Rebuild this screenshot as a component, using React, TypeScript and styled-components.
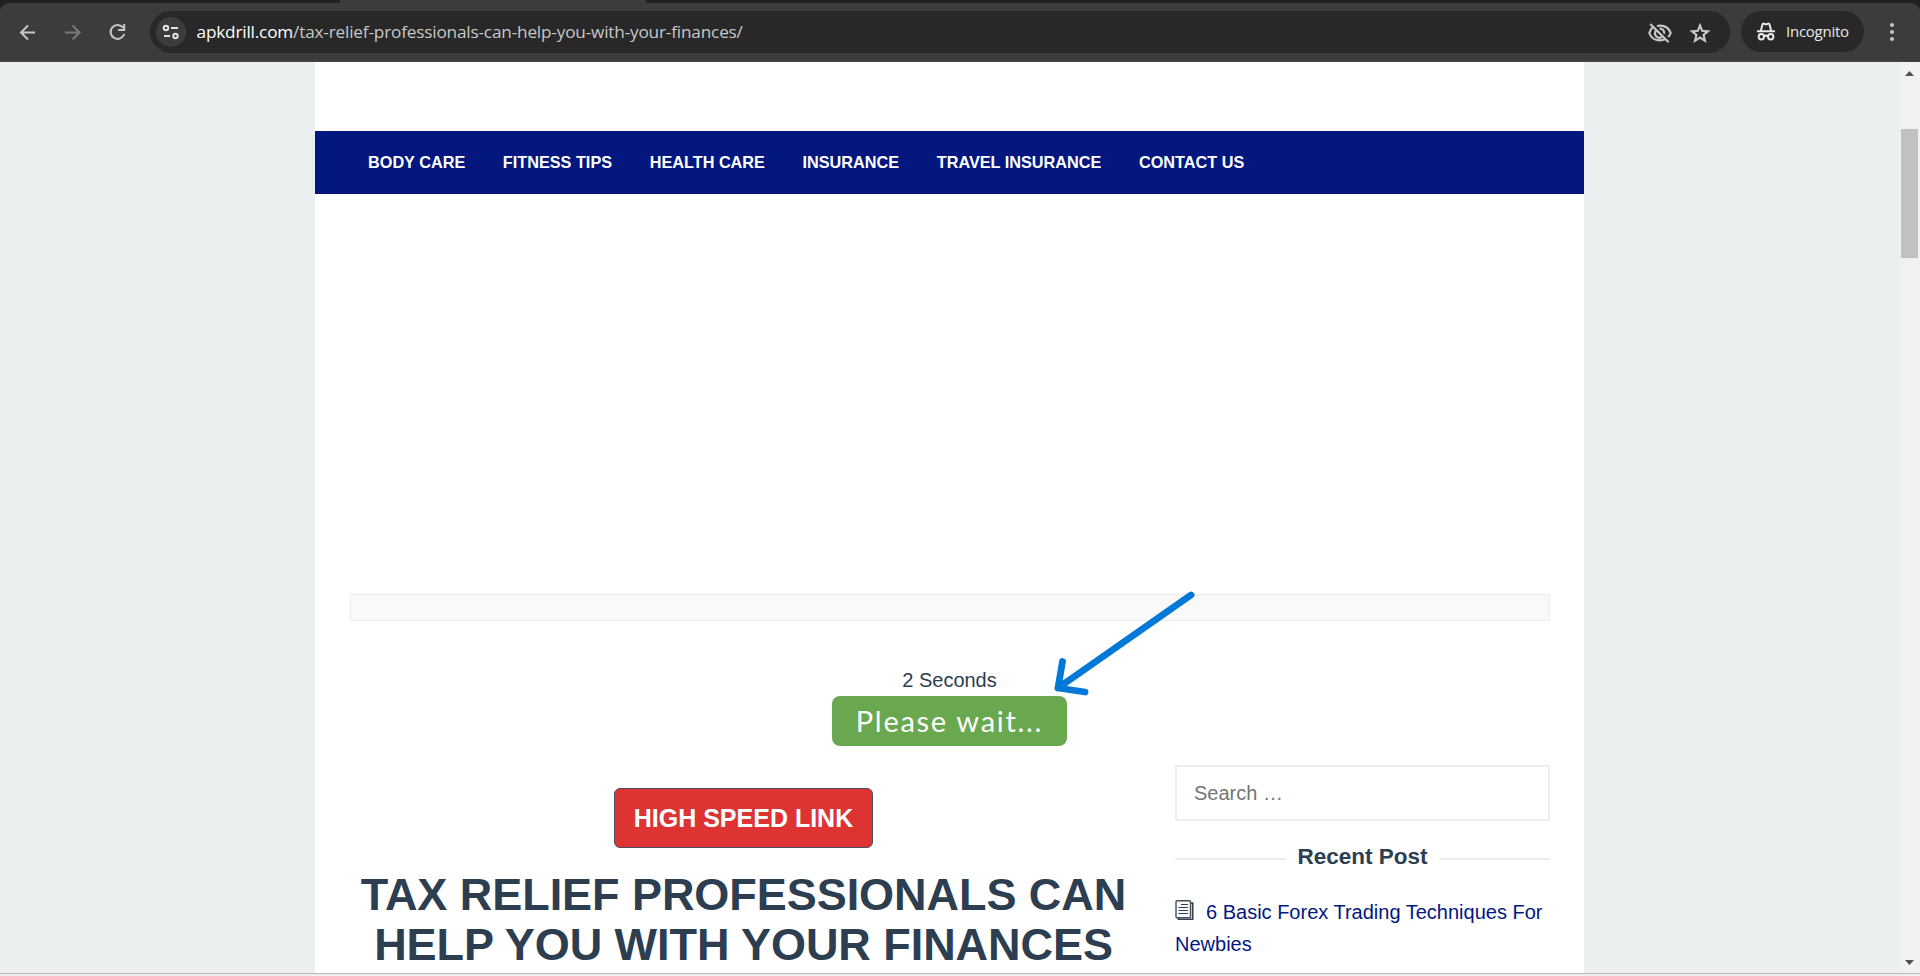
import React from "react";
import styled, { createGlobalStyle } from "styled-components";

const GlobalStyle = createGlobalStyle`
  *, *::before, *::after { box-sizing: border-box; }
  body { margin: 0; overflow: hidden; background: #ebeff0; }
`;

const Window = styled.div`
  position: relative;
  width: 1920px;
  height: 976px;
  display: flex;
  flex-direction: column;
  overflow: hidden;
  background: #3c3c3c;
  color: #2c3e50;
  font-family: "Liberation Sans", Arial, sans-serif;
  font-size: 20px;
`;

const TabStrip = styled.div`
  height: 3px;
  display: flex;
  background: #1f2221;
`;
const ActiveTab = styled.div`
  width: 306px;
  margin-left: 340px;
  height: 3px;
  background: #3c3c3c;
`;

const Toolbar = styled.header`
  height: 59px;
  flex: none;
  display: flex;
  align-items: flex-start;
  padding: 8px 0 0 16px;
  background: #3c3c3c;
  border-radius: 9px 9px 0 0;
  border-bottom: 1px solid #474747;
`;
const Backing = styled.div`
  flex: none;
  background: #1f2221;
`;

const ToolButton = styled.span<{ $dim?: boolean }>`
  width: 45px;
  height: 42px;
  display: flex;
  align-items: center;
  color: ${(p) => (p.$dim ? "#7b7b7b" : "#c7c7c7")};
`;

const AddressBar = styled.div`
  width: 1580px;
  height: 42px;
  margin-left: -1px;
  display: flex;
  align-items: center;
  padding: 0 19px 0 6px;
  border-radius: 21px;
  background: #282828;
  color: #c7c7c7;
`;
const SiteControls = styled.span`
  width: 30px;
  height: 30px;
  display: grid;
  place-items: center;
  border-radius: 50%;
  background: #3c3c3c;
  color: #e3e3e3;
`;
const Url = styled.span`
  flex: 1;
  margin-left: 10.5px;
  font: 17.2px/24px "Open Sans", "Noto Sans", sans-serif;
  letter-spacing: -0.175px;
  white-space: nowrap;
`;
const Host = styled.span`
  color: #ffffff;
`;
const BarIcons = styled.span`
  display: flex;
  align-items: center;
  gap: 17px;
  padding-top: 1px;
`;

const IncognitoChip = styled.div`
  width: 123px;
  height: 41px;
  margin-left: 11px;
  padding-left: 14px;
  display: flex;
  align-items: center;
  gap: 9px;
  border-radius: 21px;
  background: #282828;
  color: #e8e8e8;
  font: 15px/20px "Open Sans", "Noto Sans", sans-serif;
  letter-spacing: -0.25px;
`;
const ChipLabel = styled.span`
  padding-bottom: 2px;
`;
const MenuDots = styled.span`
  height: 42px;
  margin-left: 22px;
  display: flex;
  align-items: center;
`;

const Viewport = styled.div`
  height: 911px;
  flex: none;
  display: flex;
  background: #ebeff0;
`;
const Page = styled.main`
  width: 1269px;
  margin-left: 315px;
  padding-top: 69px;
  overflow: hidden;
  background: #fff;
`;

const Nav = styled.nav`
  height: 63px;
  padding: 0 53px;
  display: flex;
  align-items: center;
  gap: 37.6px;
  background: #03177f;
`;
const NavLink = styled.a`
  padding-bottom: 1px;
  color: #fff;
  font-size: 16.25px;
  font-weight: 700;
  line-height: 20px;
  white-space: nowrap;
`;

const AdSpace = styled.section`
  height: 400px;
`;
const Notice = styled.div`
  height: 27px;
  margin: 0 34px 0 35px;
  border: 1px solid #ebeced;
  background: #f9f9f9;
`;
const Countdown = styled.section`
  margin-top: 43px;
  height: 101px;
  display: flex;
  flex-direction: column;
  align-items: center;
`;
const Timer = styled.span`
  line-height: 32px;
`;
const WaitButton = styled.span`
  width: 235px;
  height: 50px;
  display: flex;
  justify-content: center;
  border-radius: 8px;
  background: #6aa84f;
  color: #fff;
  font: 29px/50px Lato, sans-serif;
  letter-spacing: 1.7px;
  white-space: nowrap;
`;

const Columns = styled.div`
  display: flex;
  justify-content: space-between;
  padding: 0 34px 0 35px;
`;
const Article = styled.article`
  width: 787px;
  padding-top: 23px;
  display: flex;
  flex-direction: column;
  align-items: center;
`;
const DownloadButton = styled.a`
  width: 259px;
  height: 60px;
  display: flex;
  align-items: center;
  justify-content: center;
  border: 1px solid #4b5160;
  border-radius: 6px;
  background: #dd3333;
  color: #fff;
  font-size: 25px;
  font-weight: 700;
  white-space: nowrap;
`;
const Title = styled.h1`
  margin: 22px 0 0;
  font-size: 45px;
  line-height: 50px;
  font-weight: 700;
  letter-spacing: -0.05px;
  text-align: center;
  white-space: nowrap;
`;

const Sidebar = styled.aside`
  width: 375px;
`;
const SearchBox = styled.div`
  height: 56px;
  padding: 0 17px;
  display: flex;
  align-items: center;
  border: 2px solid #ebeff0;
  color: #757575;
`;
const WidgetTitle = styled.h3`
  margin: 21px 0 0;
  display: flex;
  align-items: center;
  gap: 11px;
  font-size: 22.5px;
  line-height: 30px;
  white-space: nowrap;
  &::before, &::after {
    content: "";
    flex: 1;
    height: 2px;
    margin-top: 3px;
    background: #ebeff0;
  }
`;
const PostLink = styled.a`
  display: block;
  margin-top: 24px;
  color: #03177f;
  line-height: 32px;
  svg { margin-right: 12px; vertical-align: -1px; }
`;

const ScrollTrack = styled.div`
  width: 20px;
  margin-left: auto;
  padding: 9px 2px 8px 1px;
  display: flex;
  flex-direction: column;
  align-items: center;
  background: #f1f1f1;
`;
const ScrollThumb = styled.div`
  width: 17px;
  height: 129px;
  margin: 53px 0 auto;
  background: #c1c1c1;
`;
const BottomEdge = styled.div`
  height: 3px;
  flex: none;
  border-top: 1px solid #b9bbbb;
  background: #eeeeee;
`;
const Pointer = styled.svg`
  position: absolute;
  left: 1050px;
  top: 586px;
`;

const stroke = { fill: "none", stroke: "currentColor", strokeWidth: 2 } as const;

const ArrowIcon = ({ flip = false }: { flip?: boolean }) => (
  <svg width="24" height="20" viewBox="0 0 24 20" {...stroke}>
    {flip ? <path d="M4 10.5H18M11.5 3.5l7 7-7 7" /> : <path d="M19 10.5H5M12 3.5l-7 7 7 7" />}
  </svg>
);
const ReloadIcon = () => (
  <svg width="24" height="22" viewBox="0 0 24 22" {...stroke}>
    <path d="M17.3 6.8A7 7 0 1 0 18.3 13M18.2 3v6h-6" />
  </svg>
);
const TuneIcon = () => (
  <svg width="18" height="16" viewBox="0 0 18 16" {...stroke}>
    <circle cx="4" cy="4" r="2.2" />
    <path d="M9 4h7M2 12h6" />
    <circle cx="13.5" cy="12" r="2.2" />
  </svg>
);
const HiddenEyeIcon = () => (
  <svg width="24" height="22" viewBox="0 0 24 22" {...stroke} strokeWidth="2.2">
    <path d="M5.1 5C3.2 6.700 1.800 8.600 1.300 11c1.400 4.300 5.600 7.300 10.700 7.300 2 0 3.700-.4 5.200-1.200M9 4c1-.3 2-.4 3-.4 5.100 0 9.200 3 10.700 7.400-.5 1.500-1.400 2.900-2.600 4" />
    <path d="M8.200 8.500A4.300 4.300 0 0 0 14 14.800M11.500 6.700a4.300 4.300 0 0 1 4.700 5" />
    <path d="M2.300 2l18.400 18.200" />
  </svg>
);
const StarIcon = () => (
  <svg width="22" height="22" viewBox="0 0 22 22" {...stroke} strokeWidth="2.2">
    <path d="M11 3.500l2.200 5.300 5.700.5-4.300 3.700 1.300 5.600-4.900-3-4.900 3 1.300-5.600L3.100 9.300l5.700-.5z" />
  </svg>
);
const IncognitoIcon = () => (
  <svg width="22" height="22" viewBox="0 0 22 22" {...stroke}>
    <path d="M2 10.200h18M5.800 10l1.700-6.600c.3-.8.9-1 1.600-.7l1.900.7 1.900-.7c.7-.3 1.300-.1 1.600.7l1.700 6.600M9 15.300c1.200-.8 2.800-.8 4 0" />
    <circle cx="6.300" cy="15.700" r="2.700" />
    <circle cx="15.700" cy="15.700" r="2.700" />
  </svg>
);
const DotsIcon = () => (
  <svg width="12" height="20" viewBox="0 0 12 20" fill="#c7c7c7">
    <circle cx="6" cy="3" r="2" />
    <circle cx="6" cy="10" r="2" />
    <circle cx="6" cy="17" r="2" />
  </svg>
);
const PagesIcon = () => (
  <svg width="19" height="20" viewBox="0 0 19 20" {...stroke} strokeWidth="1.4">
    <path d="M3.500 18v1.300h14.200V3.200h-1.600" stroke="#36424f" strokeWidth="1.700" />
    <rect x="1" y=".8" width="14.500" height="17" rx="1" fill="#f8f9fa" stroke="#46525e" />
    <path d="M6 4.500h7M3.500 7.500h9.500M3.500 10.500h9.500M3.500 13.500h9.500" stroke="#36424f" strokeWidth="1.200" />
  </svg>
);
const ScrollArrow = ({ down = false }: { down?: boolean }) => (
  <svg width="9" height="5" viewBox="0 0 9 5" fill="#505050">
    <path d={down ? "M0 0h9L4.500 5z" : "M0 5h9L4.500 0z"} />
  </svg>
);

const links = ["BODY CARE", "FITNESS TIPS", "HEALTH CARE", "INSURANCE", "TRAVEL INSURANCE", "CONTACT US"];

export default function App() {
  return (
    <Window>
      <GlobalStyle />
      <TabStrip>
        <ActiveTab />
      </TabStrip>
      <Backing>
        <Toolbar>
          <ToolButton><ArrowIcon /></ToolButton>
          <ToolButton $dim><ArrowIcon flip /></ToolButton>
          <ToolButton><ReloadIcon /></ToolButton>
          <AddressBar>
            <SiteControls><TuneIcon /></SiteControls>
            <Url><Host>apkdrill.com</Host>/tax-relief-professionals-can-help-you-with-your-finances/</Url>
            <BarIcons><HiddenEyeIcon /><StarIcon /></BarIcons>
          </AddressBar>
          <IncognitoChip><IncognitoIcon /><ChipLabel>Incognito</ChipLabel></IncognitoChip>
          <MenuDots><DotsIcon /></MenuDots>
        </Toolbar>
      </Backing>
      <Viewport>
        <Page>
          <Nav>{links.map((l) => <NavLink key={l}>{l}</NavLink>)}</Nav>
          <AdSpace />
          <Notice />
          <Countdown>
            <Timer>2 Seconds</Timer>
            <WaitButton>Please wait...</WaitButton>
          </Countdown>
          <Columns>
            <Article>
              <DownloadButton>HIGH SPEED LINK</DownloadButton>
              <Title>TAX RELIEF PROFESSIONALS CAN<br />HELP YOU WITH YOUR FINANCES</Title>
            </Article>
            <Sidebar>
              <SearchBox>Search …</SearchBox>
              <WidgetTitle>Recent Post</WidgetTitle>
              <PostLink><PagesIcon />6 Basic Forex Trading Techniques For Newbies</PostLink>
            </Sidebar>
          </Columns>
        </Page>
        <ScrollTrack>
          <ScrollArrow />
          <ScrollThumb />
          <ScrollArrow down />
        </ScrollTrack>
      </Viewport>
      <BottomEdge />
      <Pointer width="150" height="120" viewBox="0 0 150 120" fill="none" stroke="#0078d7" strokeWidth="6.800" strokeLinecap="round" strokeLinejoin="round">
        <path d="M141 9L8 102M12.500 75.500L8 102l27 4" />
      </Pointer>
    </Window>
  );
}
